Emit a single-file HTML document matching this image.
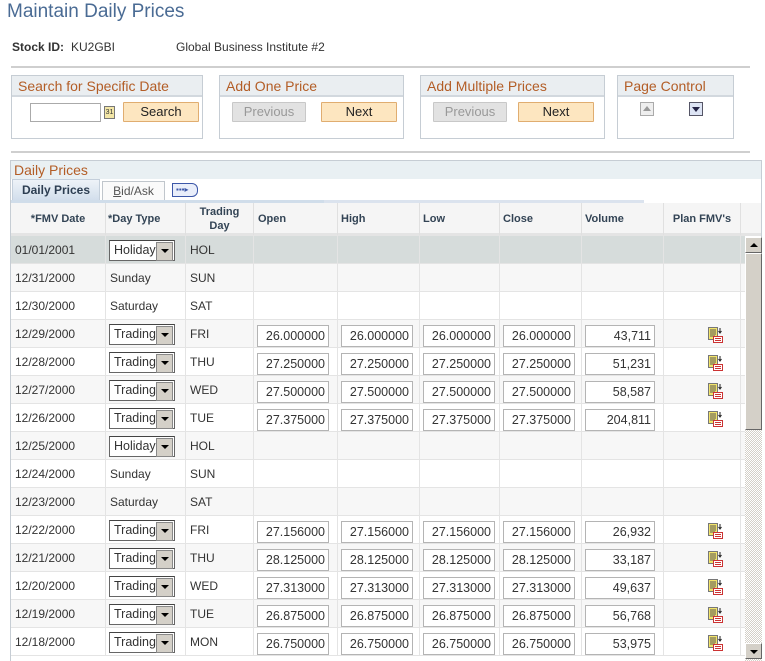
<!DOCTYPE html><html><head><meta charset="utf-8"><style>
*{box-sizing:border-box}
html,body{margin:0;width:765px;height:661px;overflow:hidden}
body{background:#fff;font-family:"Liberation Sans",Arial,sans-serif;font-size:12px;color:#333;position:relative}
.a{position:absolute}
h1{position:absolute;left:7px;top:1px;margin:0;font-weight:normal;font-size:19px;color:#4a6b94}
.hr{position:absolute;left:11px;width:739px;height:2px;background:#cfcfcf}
.gb{position:absolute;border:1px solid #c6cdd4;top:75px;height:64px}
.gb .t{height:21px;background:#eaeef1;border-bottom:2px solid #d2d8de;color:#b35d26;font-size:14px;padding:2px 0 0 6px}
.btn{position:absolute;top:102px;height:20px;border:1px solid #e0ad70;background:#fde6c0;text-align:center;font-size:13px;line-height:18px;color:#222;border-radius:1px}
.btn.d{border-color:#c8c8c8;background:#e2e2e2;color:#999}
.cell{position:absolute;top:0;height:28px;line-height:28px;border-right:1px solid #e4e4e4;padding-left:4px;white-space:nowrap}
.row{position:absolute;left:11px;width:734px;height:28px;border-bottom:1px solid #e4e4e4}
.sel{position:absolute;left:109px;top:4px;width:66px;height:21px;border:1px solid #666;border-top-color:#444;background:#fff;line-height:19px;padding-left:4px;font-size:12.5px}
.sel:after{content:"";position:absolute;right:1px;top:1px;width:15px;height:17px;background:#d4d0c8;border:1px solid #888}
.sel i{position:absolute;right:5px;top:8px;border:4px solid transparent;border-top:4px solid #000;border-bottom:0;z-index:2}
.in{position:absolute;top:5px;height:22px;border:1px solid #b4b4b4;background:#fff;text-align:right;padding-right:3px;line-height:20px;font-size:12.5px;color:#333}
.ic{position:absolute;left:697px;top:7px;width:15px;height:16px}
.hd{position:absolute;top:203px;height:32px;border-right:1px solid #e0e0e0;font-weight:bold;font-size:11px;color:#345;display:flex;align-items:center}
</style></head><body>
<h1>Maintain Daily Prices</h1>
<div class="a" style="left:12px;top:40px;font-weight:bold;font-size:12px">Stock ID:</div>
<div class="a" style="left:71px;top:40px">KU2GBI</div>
<div class="a" style="left:176px;top:40px">Global Business Institute #2</div>
<div class="hr" style="top:66px"></div>
<div class="gb" style="left:11px;width:192px"><div class="t">Search for Specific Date</div></div>
<div class="a" style="left:30px;top:103px;width:71px;height:19px;border:1px solid #aaa;background:#fff"></div>
<div class="a" style="left:104px;top:106px;width:11px;height:13px;background:#f3e6a6;border:1px solid #777;font-size:7px;line-height:12px;text-align:center">31</div>
<div class="btn" style="left:123px;width:76px">Search</div>
<div class="gb" style="left:219px;width:185px"><div class="t">Add One Price</div></div>
<div class="btn d" style="left:232px;width:74px">Previous</div>
<div class="btn" style="left:321px;width:76px">Next</div>
<div class="gb" style="left:420px;width:185px"><div class="t">Add Multiple Prices</div></div>
<div class="btn d" style="left:433px;width:74px">Previous</div>
<div class="btn" style="left:518px;width:76px">Next</div>
<div class="gb" style="left:617px;width:117px"><div class="t">Page Control</div></div>
<div class="a" style="left:640px;top:102px;width:14px;height:14px;border:1px solid #aaa;background:#eee"><i class="a" style="left:2px;top:3px;border:4px solid transparent;border-bottom:5px solid #999;border-top:0"></i></div>
<div class="a" style="left:689px;top:102px;width:14px;height:14px;border:1px solid #556;background:#dde4f4"><i class="a" style="left:2px;top:4px;border:4px solid transparent;border-top:5px solid #224;border-bottom:0"></i></div>
<div class="hr" style="top:151px"></div>

<div class="a" style="left:10px;top:160px;width:752px;height:501px;border:1px solid #c6cdd4;border-bottom:0"></div>
<div class="a" style="left:11px;top:161px;width:750px;height:18px;background:#e9f0f3;color:#b35d26;font-size:14px;padding-left:3px;line-height:18px">Daily Prices</div>
<div class="a" style="left:12px;top:179px;width:88px;height:22px;background:linear-gradient(#eef3f8,#d2deec);border:1px solid #c4cfdb;font-weight:bold;font-size:12px;color:#2d3e52;text-align:center;line-height:21px">Daily Prices</div>
<div class="a" style="left:102px;top:181px;width:63px;height:20px;border:1px solid #c0c6cc;background:#fafafa;text-align:center;line-height:19px;color:#555"><u>B</u>id/Ask</div>
<div class="a" style="left:172px;top:183px;width:26px;height:14px;border:1px solid #3c57a8;background:#e9eefa;border-radius:0 6px 6px 0;font-size:8px;color:#3c57a8;line-height:11px;padding-left:3px">▪▪▪▸</div>
<div class="a" style="left:11px;top:200px;width:313px;height:3px;background:#d0ddea"></div>
<div class="a" style="left:324px;top:200px;width:320px;height:3px;background:#dbe3ee"></div>
<div class="a" style="left:11px;top:203px;width:750px;height:33px;background:#f5f5f5;border-bottom:3px solid #e4e4e4"></div>
<div class="hd" style="left:11px;width:95px;justify-content:center">*FMV Date</div>
<div class="hd" style="left:106px;width:80px;padding-left:2px">*Day Type</div>
<div class="hd" style="left:186px;width:68px;justify-content:center;text-align:center;line-height:14px">Trading<br>Day</div>
<div class="hd" style="left:254px;width:84px;padding-left:4px">Open</div>
<div class="hd" style="left:338px;width:82px;padding-left:3px">High</div>
<div class="hd" style="left:420px;width:80px;padding-left:3px">Low</div>
<div class="hd" style="left:500px;width:82px;padding-left:3px">Close</div>
<div class="hd" style="left:582px;width:82px;padding-left:3px">Volume</div>
<div class="hd" style="left:664px;width:77px;justify-content:center">Plan FMV's</div>

<div id="rows">
<div class="row" style="top:236px;background:#d6dcdb"><div class="cell" style="left:0;width:95px">01/01/2001</div><div class="cell" style="left:95px;width:80px"></div><div class="cell" style="left:175px;width:68px">HOL</div><div class="cell" style="left:243px;width:84px"></div><div class="cell" style="left:327px;width:82px"></div><div class="cell" style="left:409px;width:80px"></div><div class="cell" style="left:489px;width:82px"></div><div class="cell" style="left:571px;width:82px"></div><div class="cell" style="left:653px;width:77px"></div><div class="sel" style="left:98px">Holiday<i></i></div></div>
<div class="row" style="top:264px;background:#f7f7f7"><div class="cell" style="left:0;width:95px">12/31/2000</div><div class="cell" style="left:95px;width:80px">Sunday</div><div class="cell" style="left:175px;width:68px">SUN</div><div class="cell" style="left:243px;width:84px"></div><div class="cell" style="left:327px;width:82px"></div><div class="cell" style="left:409px;width:80px"></div><div class="cell" style="left:489px;width:82px"></div><div class="cell" style="left:571px;width:82px"></div><div class="cell" style="left:653px;width:77px"></div></div>
<div class="row" style="top:292px"><div class="cell" style="left:0;width:95px">12/30/2000</div><div class="cell" style="left:95px;width:80px">Saturday</div><div class="cell" style="left:175px;width:68px">SAT</div><div class="cell" style="left:243px;width:84px"></div><div class="cell" style="left:327px;width:82px"></div><div class="cell" style="left:409px;width:80px"></div><div class="cell" style="left:489px;width:82px"></div><div class="cell" style="left:571px;width:82px"></div><div class="cell" style="left:653px;width:77px"></div></div>
</div>
<script>
var d=[["12/29/2000","FRI","26.000000","43,711"],["12/28/2000","THU","27.250000","51,231"],["12/27/2000","WED","27.500000","58,587"],["12/26/2000","TUE","27.375000","204,811"],["12/25/2000","HOL","",""],["12/24/2000","SUN","",""],["12/23/2000","SAT","",""],["12/22/2000","FRI","27.156000","26,932"],["12/21/2000","THU","28.125000","33,187"],["12/20/2000","WED","27.313000","49,637"],["12/19/2000","TUE","26.875000","56,768"],["12/18/2000","MON","26.750000","53,975"]];
var icon='<svg class="ic" viewBox="0 0 15 16"><rect x="0.5" y="0.5" width="9" height="12" fill="#f2e46a" stroke="#777"/><path d="M2 3h6M2 5h6M2 7h6M2 9h5" stroke="#555"/><path d="M12 1v4M10.5 4l1.5 2 1.5-2" stroke="#222" fill="none"/><rect x="5.5" y="9.5" width="9" height="6" fill="#fff" stroke="#c33"/><path d="M7 11.5h6M7 13.5h6" stroke="#c33"/></svg>';
var h="",c=[[0,95],[95,80],[175,68],[243,84],[327,82],[409,80],[489,82],[571,82],[653,77]];
d.forEach(function(r,i){var top=320+28*i,bg=i%2==0?"#f7f7f7":"#fff";var s='<div class="row" style="top:'+top+'px;background:'+bg+'">';
c.forEach(function(x,j){var t=j==0?r[0]:j==1?(r[1]=="SUN"?"Sunday":r[1]=="SAT"?"Saturday":""):j==2?r[1]:"";s+='<div class="cell" style="left:'+x[0]+'px;width:'+x[1]+'px">'+t+'</div>';});
if(r[1]!="SUN"&&r[1]!="SAT")s+='<div class="sel" style="left:98px">'+(r[1]=="HOL"?"Holiday":"Trading")+'<i></i></div>';
if(r[2]){[[246],[330],[412],[492]].forEach(function(p){s+='<div class="in" style="left:'+p[0]+'px;width:72px">'+r[2]+'</div>';});s+='<div class="in" style="left:574px;width:70px">'+r[3]+'</div>'+icon;}
s+='</div>';h+=s;});
document.getElementById("rows").insertAdjacentHTML("beforeend",h);
</script>
<div class="a" style="left:745px;top:237px;width:17px;height:424px;background:repeating-conic-gradient(#d4d0c8 0 25%,#fff 0 50%) 0 0/2px 2px"></div>
<div class="a" style="left:745px;top:237px;width:17px;height:16px;background:#d4d0c8;border:1px solid;border-color:#fff #666 #666 #fff"><i class="a" style="left:4px;top:5px;border:4px solid transparent;border-bottom:4px solid #000;border-top:0"></i></div>
<div class="a" style="left:745px;top:253px;width:17px;height:177px;background:#d4d0c8;border:1px solid;border-color:#fff #666 #666 #fff"></div>
<div class="a" style="left:745px;top:643px;width:17px;height:16px;background:#d4d0c8;border:1px solid;border-color:#fff #666 #666 #fff"><i class="a" style="left:4px;top:6px;border:4px solid transparent;border-top:4px solid #000;border-bottom:0"></i></div>
</body></html>
